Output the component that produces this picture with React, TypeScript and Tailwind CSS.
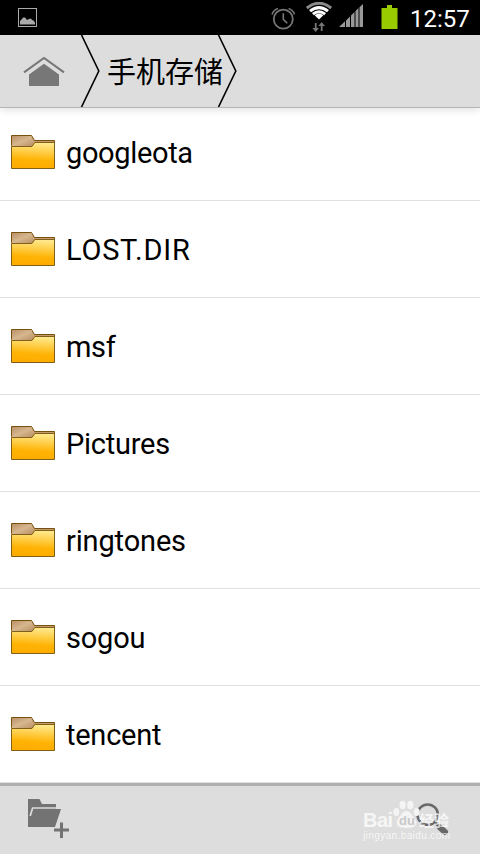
const folders = [
  { name: 'googleota', tracking: 'tracking-[-0.35px]' },
  { name: 'LOST.DIR', tracking: 'tracking-[0.75px]' },
  { name: 'msf', tracking: 'tracking-[-0.35px]' },
  { name: 'Pictures', tracking: 'tracking-[-0.25px]' },
  { name: 'ringtones', tracking: 'tracking-[-0.15px]' },
  { name: 'sogou', tracking: 'tracking-[-0.2px]' },
  { name: 'tencent', tracking: 'tracking-[-0.25px]' },
]

function PictureIcon() {
  return (
    <svg width="20" height="20" viewBox="0 0 20 20" className="mt-[8px] ml-[17px]">
      <rect x="1.5" y="0.5" width="18" height="18" fill="none" stroke="#aaa" />
      <path d="M3 16.5V13l2-2 1-1.5h2l2 2.5 2-1 2-.5 1 1.5 1.5.5 1.5 2v2z" fill="#aaa" />
    </svg>
  )
}

function AlarmIcon() {
  return (
    <svg width="24" height="24" viewBox="0 0 24 24" fill="none" stroke="#777" className="mt-[6px]">
      <circle cx="12.3" cy="13.2" r="9.5" strokeWidth="1.8" />
      <path d="M12.3 7.3v6l4 4" strokeWidth="1.6" />
      <path d="M1 8.5Q2.5 4 7 2.5M23.6 8.5Q22 4 17.6 2.5" strokeWidth="1.6" />
    </svg>
  )
}

function WifiIcon() {
  return (
    <svg width="26" height="30" viewBox="0 0 26 30" className="mt-[2px] ml-[11px]">
      <g fill="none" strokeWidth="3">
        <path d="M0.8 6Q13-3.6 25.2 6" stroke="#8a8a8a" />
        <path d="M4 9.2Q13 2 22 9.2" stroke="#fff" />
        <path d="M6.9 12.2Q13 7.2 19.1 12.2" stroke="#fff" />
      </g>
      <path d="M8.6 13.2Q13 9.8 17.4 13.2L13 17.5z" fill="#fff" />
      <path d="M8.8 21h1.8v5h2.4l-3.3 4-3.3-4h2.4zM14.8 29h1.8v-5H19l-3.3-4-3.3 4h2.4z" fill="#777" />
    </svg>
  )
}

function SignalIcon() {
  return (
    <svg width="24" height="23" viewBox="0 0 24 23" fill="#999" className="mt-[4px] ml-[7px]">
      <path d="M0 23L6 17.3V23zM7 16.5l4-4V23H7zM12 11.5l3.5-3.5v15H12zM16.5 7l3-3v19h-3zM20.5 3.3L24 0v23h-3.5z" />
    </svg>
  )
}

function BatteryIcon() {
  return (
    <svg width="17" height="24" viewBox="0 0 17 24" className="mt-[5px] ml-[18px]">
      <path d="M6 0h5v3h5.5v21H.5V3H6z" fill="#99cc00" />
    </svg>
  )
}

function HomeIcon() {
  return (
    <svg width="42" height="30" viewBox="0 0 42 30" className="ml-[23px]">
      <path d="M1 16.4L21 2l20 14.4" fill="none" stroke="#777" strokeWidth="2" />
      <path d="M6 18.6L21 7.8l15 10.8V30H6z" fill="#777" />
    </svg>
  )
}

function Chevron() {
  return (
    <svg width="20" height="72" viewBox="0 0 20 72" fill="none" stroke="#000" strokeWidth="1.6">
      <path d="M1.5 0L18.8 36 1.5 72" />
    </svg>
  )
}

function FolderIcon() {
  return (
    <svg width="46" height="36" viewBox="0 0 46 36">
      <path d="M1.5 1.5h20l3 5h20v5h-43z" fill="#c59a6d" stroke="#76500d" />
      <path d="M1.5 12.5h20.5l2.8-4h19.7v26h-43z" fill="url(#front)" stroke="#806018" />
      <path d="M2 2h19.2l2.6 5.7L21.7 12H2z" fill="url(#tab)" />
    </svg>
  )
}

function NewFolderIcon() {
  return (
    <svg width="44" height="42" viewBox="0 0 44 42" fill="#737373" className="mb-[3px] ml-[27px]">
      <path d="M1 1h11.5l2.5 5h14v5h5l-6 18H1z" />
      <path d="M3.2 18L5.6 10H34.5" fill="none" stroke="#ddd" strokeWidth="1.7" />
      <path d="M33 24.5h3v6h6v3h-6V40h-3v-6.5h-6v-3h6z" />
    </svg>
  )
}

function SearchIcon() {
  return (
    <svg width="34" height="34" viewBox="0 0 34 34" fill="none" stroke="#686868" className="mr-[31px] mb-[4px]">
      <circle cx="12.7" cy="12.7" r="10.2" strokeWidth="2.5" />
      <path d="M19.8 20.2l4 4" strokeWidth="3" />
      <path d="M25 25.5l5 4.5" strokeWidth="6" strokeLinecap="round" />
    </svg>
  )
}

function Watermark() {
  return (
    <div className="absolute bottom-[11px] left-[363px] z-20 h-[42px] w-[90px] text-white/75">
      <span className="absolute top-[9px] left-0 font-['Liberation_Sans'] text-[20px] leading-[20px] font-bold tracking-[-0.5px]">Bai</span>
      <svg width="28" height="30" viewBox="0 0 28 30" fill="#f4f4f4" className="absolute -top-px left-[30px]">
        <ellipse cx="3.3" cy="12" rx="3" ry="4" />
        <ellipse cx="9.6" cy="5" rx="3.1" ry="4.3" />
        <ellipse cx="17.3" cy="5" rx="3.1" ry="4.3" />
        <ellipse cx="23.7" cy="12" rx="3" ry="4" />
        <path d="M13.5 11c4 0 5 4 8 7 3 4 2 8-2 9.5-3 .5-9 .5-12 0-4-1.500-5-5.500-2-9.500 3-3 4-7 8-7z" />
      </svg>
      <span className="absolute top-[13px] left-[36px] font-['Liberation_Sans'] text-[13px] leading-[14px] font-bold text-[#c8c8c8]">du</span>
      <span className="absolute top-[9px] left-[56px] font-['Noto_Sans_CJK_SC',sans-serif] text-[15px] leading-[20px] font-bold">经验</span>
      <span className="absolute top-[29px] left-0 font-['Liberation_Sans'] text-[10px] leading-[12px] tracking-[0.4px]">jingyan.baidu.com</span>
    </div>
  )
}

export default function App() {
  return (
    <div className="relative flex h-[854px] w-[480px] flex-col overflow-hidden bg-white font-[Roboto,'Noto_Sans_CJK_SC',sans-serif] text-black">
      <svg width="0" height="0" className="absolute">
        <defs>
          <linearGradient id="front" x1="0.4" y1="0" x2="0.3" y2="1">
            <stop offset="0" stopColor="#ffe98c" />
            <stop offset="0.65" stopColor="#ffb305" />
            <stop offset="1" stopColor="#ffab00" />
          </linearGradient>
          <linearGradient id="tab" x1="0" y1="0" x2="1" y2="1">
            <stop offset="0" stopColor="#bc9168" />
            <stop offset="0.5" stopColor="#d6b78f" />
            <stop offset="1" stopColor="#bb8f63" />
          </linearGradient>
        </defs>
      </svg>

      <div className="flex h-[35px] shrink-0 items-start justify-between bg-black">
        <PictureIcon />
        <div className="flex items-start pr-[10px]">
          <AlarmIcon />
          <WifiIcon />
          <SignalIcon />
          <BatteryIcon />
          <span className="ml-[12px] w-[60px] text-[24px] leading-[38px] whitespace-nowrap text-white">12:57</span>
        </div>
      </div>

      <header className="z-10 flex h-[73px] shrink-0 items-center border-b border-[#b5b5b5] bg-[#ddd] shadow-[0_2px_8px_rgba(0,0,0,0.12)]">
        <HomeIcon />
        <div className="ml-[15px] flex items-center">
          <Chevron />
          <h1 className="ml-[7px] w-[110px] pt-[5px] text-[29px] leading-[67px] whitespace-nowrap">手机存储</h1>
          <Chevron />
        </div>
      </header>

      <main className="-mt-[4px] flex-1">
        {folders.map((folder) => (
          <div key={folder.name} className="flex h-[97px] items-center border-b border-[#e0e0e0] pl-[10px]">
            <FolderIcon />
            <span className={`ml-[10px] pt-[3px] text-[29px] ${folder.tracking}`}>{folder.name}</span>
          </div>
        ))}
      </main>

      <footer className="z-10 flex h-[72px] shrink-0 items-center justify-between border-t-[3px] border-[#b0b0b0] bg-[#ddd]">
        <NewFolderIcon />
        <SearchIcon />
      </footer>
      <Watermark />
    </div>
  )
}
